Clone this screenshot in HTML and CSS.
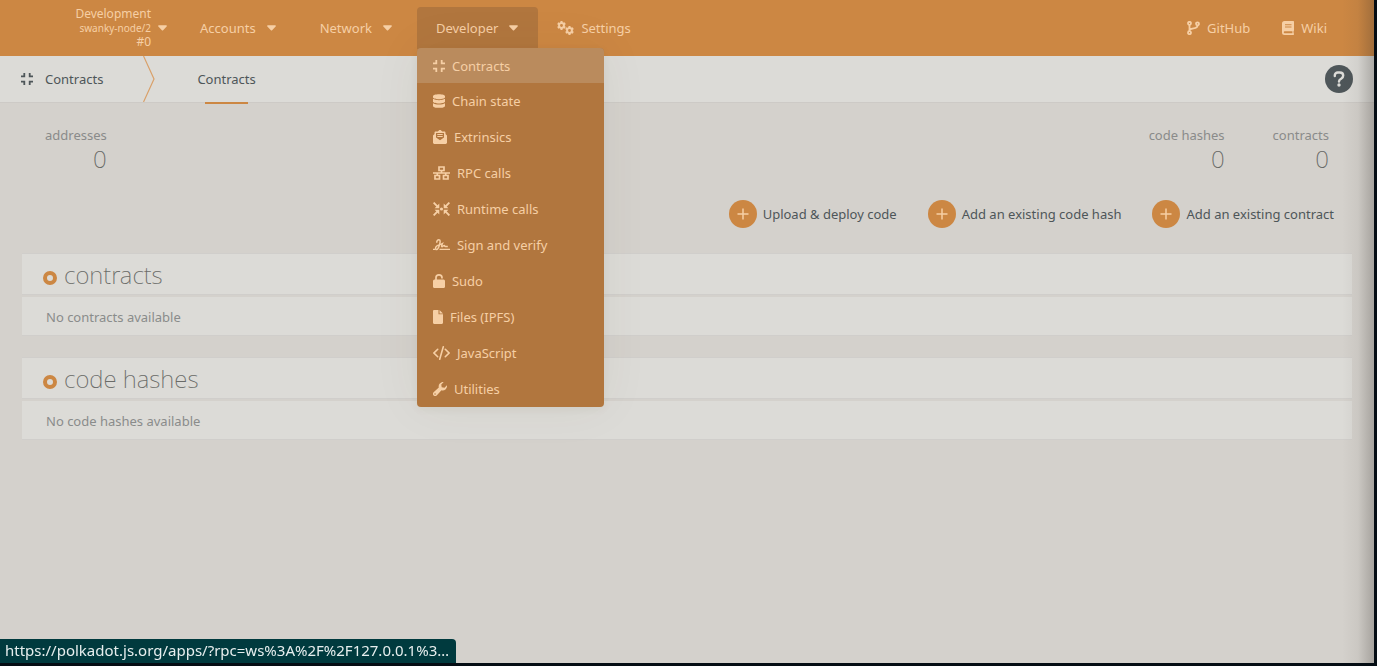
FILE: index.html
```html
<!DOCTYPE html>
<html lang="en">
<head>
<meta charset="utf-8">
<title>Contracts</title>
<link rel="stylesheet" href="styles.css">
</head>
<body>
<svg class="defs" aria-hidden="true">
  <symbol id="compress" viewBox="0 0 12 14"><path d="M3.300 1v3.300H0M8.700 1v3.300H12M3.300 13V9.700H0M8.700 13V9.700H12" fill="none" stroke="currentColor" stroke-width="1.800"/></symbol>
  <symbol id="caret" viewBox="0 0 10 6"><path d="M1 0h8c.9 0 1.200.8.600 1.400L5.700 5.500c-.4.400-1 .4-1.400 0L.4 1.400C-.2.800.1 0 1 0z" fill="currentColor"/></symbol>
  <symbol id="plus" viewBox="0 0 12 12"><path d="M6 .5v11M.5 6h11" stroke="currentColor" stroke-width="1.500" fill="none"/></symbol>
  <symbol id="cog" viewBox="0 0 10 10"><circle cx="5" cy="5" r="2.700" fill="none" stroke="currentColor" stroke-width="2.200"/><path d="M5 .1v2M5 7.900v2M.8 2.500l1.800 1.100M7.400 6.400l1.800 1.100M.8 7.500l1.800-1.100M7.400 3.600l1.800-1.100" stroke="currentColor" stroke-width="2.300"/></symbol>
</svg>
<div class="page">
  <header class="topbar">
    <button class="chain">
      <span class="chain-text"><span>Development</span><small>swanky-node/2</small><span>#0</span></span>
      <svg class="caret"><use href="#caret"/></svg>
    </button>
    <nav class="nav">
      <button class="nav-item">Accounts <svg class="caret"><use href="#caret"/></svg></button>
      <button class="nav-item">Network <svg class="caret"><use href="#caret"/></svg></button>
      <div class="nav-group">
        <button class="nav-item open">Developer <svg class="caret"><use href="#caret"/></svg></button>
        <ul class="menu">
          <li><a class="current" href="#"><svg class="w12"><use href="#compress"/></svg>Contracts</a></li>
          <li><a href="#"><svg class="w12" viewBox="0 0 448 512"><path fill="currentColor" d="M448 73.143v45.714C448 159.143 347.667 192 224 192S0 159.143 0 118.857V73.143C0 32.857 100.333 0 224 0s224 32.857 224 73.143zM448 176v102.857C448 319.143 347.667 352 224 352S0 319.143 0 278.857V176c48.125 33.143 136.208 48.572 224 48.572S399.874 209.143 448 176zm0 160v102.857C448 479.143 347.667 512 224 512S0 479.143 0 438.857V336c48.125 33.143 136.208 48.572 224 48.572S399.874 369.143 448 336z"/></svg>Chain state</a></li>
          <li><a href="#"><svg class="w14" viewBox="0 0 14 14"><path fill="currentColor" fill-rule="evenodd" d="M0 5.500l1.500-1.500V2.800C1.500 2 2 1.500 2.800 1.500h2C5.500.700 6.200 0 7 0s1.500.7 2.200 1.500h2c.8 0 1.300.5 1.300 1.300V4L14 5.500v7.100c0 .8-.6 1.400-1.400 1.400H1.400C.6 14 0 13.400 0 12.600zM3 3v4.500L7 10.300l4-2.800V3z"/><path d="M4.300 4.500h5.400M4.300 6.500h5.400" stroke="currentColor" stroke-width="1.100"/></svg>Extrinsics</a></li>
          <li><a href="#"><svg class="w17" viewBox="0 0 17 14"><path d="M6 1h5v3.500H6zM2 9.500h4.500V13H2zM10.500 9.500H15V13h-4.500zM8.500 4.500V7M0 7h17M4.300 7v2.500M12.700 7v2.500" fill="none" stroke="currentColor" stroke-width="1.700"/></svg>RPC calls</a></li>
          <li><a href="#"><svg class="w17" viewBox="0 0 17 14"><path d="M.6.600l4 4M.6 13.400l4-4M16.400.600l-4 4M16.400 13.400l-4-4" stroke="currentColor" stroke-width="1.900"/><path fill="currentColor" d="M6.300 1.500V6.200H1.600zM6.300 12.500V7.800H1.600zM10.700 1.500V6.200h4.700zM10.700 12.500V7.800h4.700z"/><circle cx="8.500" cy="7" r="1.600" fill="currentColor"/></svg>Runtime calls</a></li>
          <li><a href="#"><svg class="w17" viewBox="0 0 17 14"><path d="M3.700 4.800C3.700 2.800 4.700 1.800 5.900 1.800c1.600 0 1.400 2 .8 4.200-.7 2.700-1.500 5.600-3.100 5.600-1.400 0-1.500-2.200.2-3.600C5 7 7.500 6.600 9.300 5.700 8.500 7.500 8.300 8.700 9 8.700c.8 0 1.400-1.300 2.200-1.300.7 0 .3 1.100 1 1.100h2.600" fill="none" stroke="currentColor" stroke-width="1.500"/><path d="M0 11.300h2M6.500 11.300H17" stroke="currentColor" stroke-width="1.300"/></svg>Sign and verify</a></li>
          <li><a href="#"><svg class="w12" viewBox="0 0 12 14"><path d="M3 7V3.800C3 2 4.300.9 6 .9s3 1.100 3 2.900" fill="none" stroke="currentColor" stroke-width="1.700" stroke-linecap="round"/><rect y="5.500" width="12" height="8.500" rx="1.500" fill="currentColor"/></svg>Sudo</a></li>
          <li><a href="#"><svg class="w10" viewBox="0 0 10 14"><path fill="currentColor" d="M1.200 0H5.500v4.300H10v8.500c0 .7-.5 1.200-1.200 1.200H1.200C.5 14 0 13.500 0 12.800V1.200C0 .5.5 0 1.200 0zM6.500 0L10 3.400H6.500z"/></svg>Files (IPFS)</a></li>
          <li><a href="#"><svg class="w17" viewBox="0 0 17 14"><path d="M4.700 3.300L1 7l3.700 3.700M12.300 3.300L16 7l-3.700 3.700M10.300.8l-3.600 12.400" fill="none" stroke="currentColor" stroke-width="1.600" stroke-linecap="round"/></svg>JavaScript</a></li>
          <li><a href="#"><svg class="w14" viewBox="0 0 14 14"><path fill="currentColor" fill-rule="evenodd" d="M13.900 3.300c.4 1.700-.3 3.200-1.400 4.200-1.200 1-2.700 1.200-4 .8l-4.800 5.100a2.100 2.100 0 0 1-3.100-3.100l5.200-4.700c-.4-1.400-.1-2.900 1-4C7.900.400 9.300-.2 10.700.1L8.300 2.500l.4 2.800 2.800.4zM2 11.300a.7.700 0 1 0 .1 1.400.7.700 0 0 0-.1-1.400z"/></svg>Utilities</a></li>
        </ul>
      </div>
      <a class="nav-link" href="#"><svg class="w17" viewBox="0 0 17 14"><use href="#cog" x="0" y="0" width="9" height="9"/><use href="#cog" x="8" y="5" width="9" height="9"/></svg>Settings</a>
    </nav>
    <nav class="nav external">
      <a class="nav-link" href="#"><svg class="w13" viewBox="0 0 13 14"><g fill="none" stroke="currentColor" stroke-width="1.800"><circle cx="2.500" cy="2.300" r="1.500"/><circle cx="2.500" cy="11.700" r="1.500"/><circle cx="10.500" cy="2.800" r="1.500"/><path d="M2.500 4v6M10.500 4.500c0 3.800-5 2.200-7.500 4"/></g></svg>GitHub</a>
      <a class="nav-link" href="#"><svg class="w12" viewBox="0 0 12 14"><path fill="currentColor" fill-rule="evenodd" d="M2.500 0h8.800c.4 0 .7.300.7.700v8.600c0 .3-.1.500-.4.600v2.300c.3.100.4.300.4.600v.5c0 .4-.3.700-.7.700H2.500A2.500 2.500 0 0 1 0 11.500v-9A2.500 2.500 0 0 1 2.500 0zM3 3.200v1h6.500v-1zM3 5.400v1h6.500v-1zM2.700 10.300a.9.900 0 0 0 0 1.900h7.700v-1.900z"/></svg>Wiki</a>
    </nav>
  </header>

  <div class="tabs">
    <div class="section-name"><svg class="w12"><use href="#compress"/></svg>Contracts</div>
    <svg class="chevron" viewBox="0 0 12 46"><path d="M.5 0L11 23 .5 46" fill="none" stroke="#d9a069" stroke-width="1.200"/></svg>
    <a class="tab" href="#">Contracts</a>
    <button class="help" aria-label="Help"><svg viewBox="0 0 12 16"><path d="M1.800 5V4.300C1.800 2.700 3 1.500 4.700 1.500h2.200c1.900 0 3.300 1.400 3.300 3.100 0 1.300-.7 2.300-1.800 3C6.800 8.500 6 8.800 6 10.500" fill="none" stroke="currentColor" stroke-width="2.400" stroke-linecap="round"/><circle cx="6" cy="14" r="1.700" fill="currentColor"/></svg></button>
  </div>

  <main class="content">
    <section class="summary">
      <dl><dt>addresses</dt><dd>0</dd></dl>
      <dl class="push"><dt>code hashes</dt><dd>0</dd></dl>
      <dl><dt>contracts</dt><dd>0</dd></dl>
    </section>
    <div class="actions">
      <button><span class="round"><svg><use href="#plus"/></svg></span>Upload &amp; deploy code</button>
      <button><span class="round"><svg><use href="#plus"/></svg></span>Add an existing code hash</button>
      <button><span class="round"><svg><use href="#plus"/></svg></span>Add an existing contract</button>
    </div>
    <section class="list">
      <h1><i class="ring"></i>contracts</h1>
      <p>No contracts available</p>
    </section>
    <section class="list">
      <h1><i class="ring"></i>code hashes</h1>
      <p>No code hashes available</p>
    </section>
  </main>
</div>
<div class="status">https://polkadot.js.org/apps/?rpc=ws%3A%2F%2F127.0.0.1%3…</div>
</body>
</html>
```
FILE: styles.css
```css
* { box-sizing: border-box; }
body {
  margin: 0;
  padding: 0 3px 3px 0;
  min-height: 100vh;
  display: flex;
  background: #050d14;
  color: #4e5659;
  font: 13px/20px "Noto Sans", sans-serif;
}
button { font: inherit; color: inherit; background: none; border: 0; padding: 0; }
a { color: inherit; text-decoration: none; }
svg { display: block; flex: none; height: 14px; }
.defs { position: absolute; width: 0; height: 0; }
.w10 { width: 10px; }
.w12 { width: 12px; }
.w13 { width: 13px; }
.w14 { width: 14px; }
.w17 { width: 17px; }
.caret { width: 9px; height: 6px; }

.page { position: relative; flex: 1; background: #d4d1cc; }
.page::after {
  content: "";
  position: absolute;
  inset: 0 0 0 auto;
  width: 32px;
  background: linear-gradient(to right, rgba(60, 50, 45, 0), rgba(60, 50, 45, .06) 50%, rgba(50, 45, 40, .28));
  pointer-events: none;
}

.topbar {
  display: flex;
  align-items: center;
  height: 56px;
  padding-right: 34px;
  background: #cc8743;
  color: #f6cfa5;
}
.chain { display: flex; align-items: center; gap: 7px; width: 167px; justify-content: flex-end; text-align: right; }
.chain-text { display: flex; flex-direction: column; font-size: 12px; line-height: 14px; }
.chain-text small { font-size: 10px; }
.nav { display: flex; gap: 6px; margin-left: 14px; }
.nav-item { display: flex; align-items: center; gap: 11px; height: 42px; padding: 0 19px; }
.nav-group { position: relative; }
.open { padding-right: 20px; background: #b1763e; border-radius: 4px 4px 0 0; }
.nav-link { display: flex; align-items: center; gap: 7px; padding: 0 13px; }
.external { margin-left: auto; }

.menu {
  position: absolute;
  z-index: 2;
  top: 41px;
  left: 0;
  width: 187px;
  margin: 0;
  padding: 0;
  list-style: none;
  background: #b1763e;
  border-radius: 4px;
  box-shadow: 0 2px 8px rgba(80, 60, 40, .06), 0 0 50px rgba(80, 60, 40, .06);
  overflow: hidden;
}
.menu a { display: flex; align-items: center; gap: 7px; height: 36px; padding: 0 16px; }
.menu .current { height: 35px; background: #ba8b5d; }

.tabs {
  display: flex;
  align-items: center;
  height: 47px;
  padding: 0 21px;
  background: #dcdbd7;
  border-bottom: 1px solid #cdcac6;
}
.section-name { display: flex; align-items: center; gap: 12px; }
.chevron { width: 12px; height: 46px; margin-left: 40px; }
.tab { position: relative; margin-left: 42px; line-height: 46px; }
.tab::after { content: ""; position: absolute; left: 8px; right: 8px; bottom: -2px; height: 2px; background: #cc8743; }
.help {
  display: grid;
  place-items: center;
  width: 28px;
  height: 28px;
  margin-left: auto;
  border-radius: 50%;
  background: #4e5659;
  color: #dcdbd7;
}
.help svg { width: 12px; height: 16px; }

.content { padding: 22px 22px 0; }
.summary { display: flex; gap: 48px; padding: 0 23px; text-align: right; }
dl, dd { margin: 0; }
dt { color: #8a8b8a; }
dd { font-size: 24px; line-height: 28px; font-weight: 200; color: #666764; }
.push { margin-left: auto; }
.actions { display: flex; justify-content: flex-end; gap: 31px; padding: 27px 18px 0; }
.actions button { display: flex; align-items: center; gap: 6px; }
.round { display: grid; place-items: center; width: 28px; height: 28px; border-radius: 50%; background: #cc8743; color: #f6cfa5; }
.round svg { width: 12px; height: 12px; }

.list { margin-top: 25px; color: #8a8c8b; }
.list + .list { margin-top: 21px; }
.list h1 {
  display: flex;
  align-items: center;
  gap: 7px;
  height: 42px;
  margin: 0 0 2px;
  padding: 2px 21px 0;
  background: #dcdbd7;
  border: 1px solid #d0cecb;
  border-width: 1px 0;
  color: #6a6b68;
  font-size: 24px;
  font-weight: 200;
}
.ring { width: 14px; height: 14px; margin-top: 6px; border: 4px solid #cc8743; border-radius: 50%; }
.list p { margin: 0; padding: 10px 24px 8px; background: #dcdbd7; border-bottom: 1px solid #d0cecb; }

.status {
  position: fixed;
  left: 0;
  bottom: 3px;
  width: 456px;
  padding: 0 5px 2px;
  line-height: 22px;
  font-size: 15px;
  white-space: nowrap;
  background: #003a3e;
  border-radius: 0 4px 0 0;
  color: #e6eeee;
}
```
